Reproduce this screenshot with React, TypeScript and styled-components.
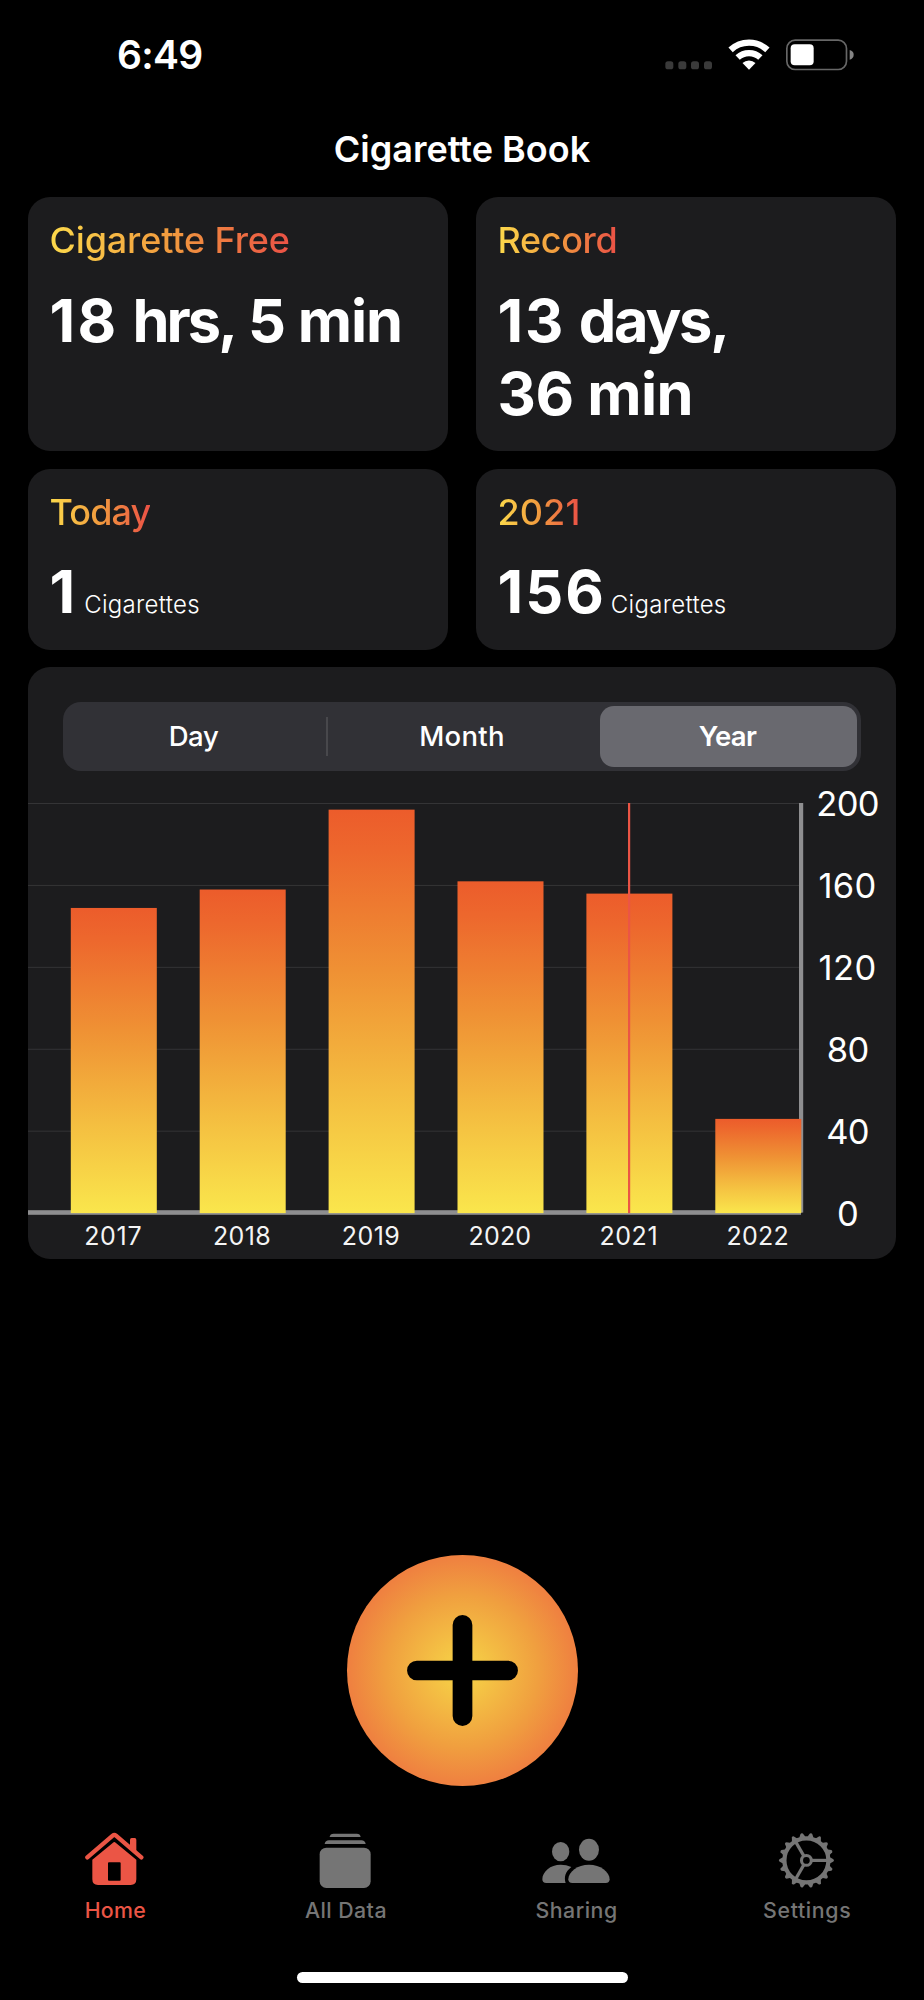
import React from "react";
import styled, { createGlobalStyle } from "styled-components";

const GlobalStyle = createGlobalStyle`
  *, *::before, *::after { box-sizing: border-box; }
  body {
    margin: 0;
    background: #000;
    color: #fff;
    font-family: Inter, "Liberation Sans", sans-serif;
  }
  button { font: inherit; color: inherit; border: 0; padding: 0; background: none; }
`;

const Screen = styled.div`
  display: flex;
  flex-direction: column;
  width: 924px;
  height: 2000px;
  background: #000;
  overflow: hidden;

  > * { flex: none; }
`;

const StatusBar = styled.header`
  display: flex;
  align-items: center;
  justify-content: space-between;
  height: 110px;
  padding: 0 70px 0 117px;
`;

const Clock = styled.time`
  font-size: 39px;
  font-weight: 600;
  line-height: 48px;
  letter-spacing: -0.7px;
`;

const StatusIcons = styled.svg`
  width: 189px;
  height: 32px;
  margin-top: -1px;
  display: block;
`;

const NavTitle = styled.h1`
  margin: 0;
  height: 87px;
  font-size: 36px;
  font-weight: 580;
  line-height: 78px;
  text-align: center;
`;

const Content = styled.main`
  display: flex;
  flex-direction: column;
  height: 1358px;
  padding: 0 28px;
`;

const StatGrid = styled.section`
  display: grid;
  grid-template-columns: 1fr 1fr;
  grid-template-rows: 254px 181.5px;
  gap: 17.5px 28px;
`;

const StatCard = styled.article`
  padding: 22px 21.5px;
  border-radius: 22px;
  background: #1c1c1e;
`;

const StatLabel = styled.h2<{ $track: number }>`
  width: fit-content;
  margin: 0 0 21.5px;
  font-size: 36px;
  font-weight: 450;
  line-height: 43px;
  letter-spacing: ${(p) => p.$track}px;
  color: transparent;
  background: linear-gradient(90deg, #fcd94b 0%, #f19a3e 50%, #eb5545 97%);
  background-clip: text;
  -webkit-background-clip: text;
`;

const StatLine = styled.div<{ $gap?: number }>`
  display: flex;
  align-items: baseline;
  gap: ${(p) => p.$gap ?? 0}px;
  line-height: 73px;
`;

const StatValue = styled.strong`
  font-size: 59.5px;
  font-weight: 700;
  white-space: pre;
`;

const Tracked = styled.span<{ $by: number }>`
  letter-spacing: ${(p) => p.$by}px;
`;

const StatUnit = styled.span`
  font-size: 24px;
  font-weight: 300;
  letter-spacing: 0.3px;
`;

const ChartCard = styled.section`
  display: flex;
  flex-direction: column;
  height: 592px;
  margin-top: 17px;
  padding-top: 35px;
  border-radius: 22px;
  background: #1c1c1e;
  overflow: hidden;
`;

const Segments = styled.div`
  display: grid;
  grid-template-columns: 265px 272px 257px;
  flex: none;
  height: 69px;
  margin: 0 35px;
  padding: 4px 0;
  border-radius: 18px;
  background: #313136;
`;

const Segment = styled.button<{ $selected?: boolean; $divided?: boolean; $track: number }>`
  display: flex;
  align-items: center;
  justify-content: center;
  padding-right: ${(p) => (p.$selected ? 2 : 4)}px;
  border-radius: ${(p) => (p.$selected ? "14px" : "0")};
  background: ${(p) =>
    p.$selected
      ? "#69696f"
      : p.$divided
        ? "linear-gradient(#48484c, #48484c) right center / 2px 39px no-repeat"
        : "none"};
  font-size: 27.5px;
  font-weight: ${(p) => (p.$selected ? 580 : 480)};
  line-height: 61px;
  letter-spacing: ${(p) => p.$track}px;
`;

const Chart = styled.svg`
  display: block;
  flex: none;
  width: 868px;
  height: 488px;
`;

const YearLabel = styled.text`
  fill: #f4f4f4;
  font-size: 25px;
  text-anchor: middle;
`;

const ScaleLabel = styled.text`
  fill: #fff;
  font-size: 34.5px;
  text-anchor: middle;
`;

const AddButton = styled.button`
  display: flex;
  align-items: center;
  justify-content: center;
  flex: none;
  width: 231px;
  height: 231px;
  margin: 0 auto 29px;
  border-radius: 50%;
  background: radial-gradient(circle closest-side, #f7d147 0%, #f5c845 17%, #f0a03f 65%, #ef8140 98%);
`;

const Plus = styled.svg`
  width: 111px;
  height: 111px;
  stroke: #000;
  stroke-width: 19.7px;
  stroke-linecap: round;
`;

const TabBar = styled.nav`
  display: grid;
  grid-template-columns: repeat(4, 1fr);
  height: 115px;
  padding: 15px 1.5px 0 0;
`;

const Tab = styled.a<{ $active?: boolean; $track: number }>`
  display: flex;
  flex-direction: column;
  align-items: center;
  color: ${(p) => (p.$active ? "#eb5545" : "#757575")};
  font-size: 21.3px;
  font-weight: 500;
  line-height: 26px;
  letter-spacing: ${(p) => p.$track}px;
`;

const TabIcon = styled.svg`
  display: block;
  height: 60px;
  margin-bottom: 7px;
  fill: currentColor;
`;

const HomeIndicator = styled.div`
  width: 331px;
  height: 11px;
  margin: auto auto 17.5px;
  border-radius: 6px;
  background: #fff;
`;

const years = [
  { year: 2017, count: 149, track: 0.7 },
  { year: 2018, count: 158, track: 0.4 },
  { year: 2019, count: 197, track: 0.4 },
  { year: 2020, count: 162, track: 0.2 },
  { year: 2021, count: 156, track: 0.6 },
  { year: 2022, count: 46, track: 0.2 },
];
const scale = [200, 160, 120, 80, 40, 0];

const PLOT_TOP = 32.5;
const PLOT_HEIGHT = 409.6;
const yFor = (value: number) => PLOT_TOP + PLOT_HEIGHT * (1 - value / 200);
const xFor = (index: number) => 42.8 + index * 128.9;

function YearChart() {
  return (
    <Chart viewBox="0 0 868 488">
      <defs>
        <linearGradient id="bar" x1="0" y1="0" x2="0" y2="1">
          <stop offset="0" stopColor="#ec5c2b" />
          <stop offset="0.1" stopColor="#ed672d" />
          <stop offset="0.4" stopColor="#ef9134" />
          <stop offset="0.7" stopColor="#f4bd40" />
          <stop offset="1" stopColor="#fae64c" />
        </linearGradient>
      </defs>
      {scale.slice(0, 5).map((v) => (
        <rect key={v} x="0" y={yFor(v) - 0.5} width="773" height="1" fill="#343436" />
      ))}
      <rect x="771" y={PLOT_TOP - 0.5} width="4.2" height={PLOT_HEIGHT} fill="#8e8e90" />
      <rect x="0" y="439.2" width="773" height="4.6" fill="#8e8e90" />
      {years.map(({ year, count, track }, i) => (
        <g key={year}>
          <rect x={xFor(i)} y={yFor(count)} width="86" height={yFor(0) - yFor(count)} fill="url(#bar)" />
          <YearLabel x={xFor(i) + 42.4} y="473.6" letterSpacing={track}>{year}</YearLabel>
        </g>
      ))}
      <rect x="600" y={PLOT_TOP - 0.5} width="2.2" height={PLOT_HEIGHT + 0.5} fill="#eb5545" />
      {scale.map((v) => (
        <ScaleLabel key={v} x="819.6" y={yFor(v) + 12.5} letterSpacing={v === 160 || v === 120 ? 0.4 : -0.7}>{v}</ScaleLabel>
      ))}
    </Chart>
  );
}

function GearIcon() {
  const teeth = Array.from({ length: 18 }, (_, i) => i * 20);
  return (
    <TabIcon viewBox="-29.4 -30.4 60 60" width="60">
      {teeth.map((a) => (
        <path key={a} d="M22 -3.3 L24 -2.8 L27 -1.2 Q28.2 0 27 1.2 L24 2.8 L22 3.3Z" transform={`rotate(${a})`} />
      ))}
      <g fill="none" stroke="currentColor">
        <circle r="22" strokeWidth="4.2" />
        <circle r="4.9" strokeWidth="3.1" />
        {[0, 120, 240].map((a) => (
          <path key={a} d="M5.5 0H22" strokeWidth="3.2" transform={`rotate(${a})`} />
        ))}
      </g>
    </TabIcon>
  );
}

export default function App() {
  return (
    <>
      <GlobalStyle />
      <Screen>
        <StatusBar>
          <Clock>6:49</Clock>
          <StatusIcons viewBox="46 56 567 96">
            {[59, 98, 136, 175].map((x) => (
              <rect key={x} x={x - 12} y="123" width="24" height="24" rx="8" fill="#3a3a3a" />
            ))}
            <g fill="none" stroke="#fff">
              <path d="M242.8 88.8 A81 81 0 0 1 353.2 88.8" strokeWidth="19" />
              <path d="M263.9 111.4 A50.5 50.5 0 0 1 332.1 111.4" strokeWidth="19" />
            </g>
            <path d="M298 148 L278.5 128 A29 29 0 0 1 317.5 128Z" fill="#fff" />
            <rect x="411.5" y="59.5" width="179" height="88" rx="25" fill="none" stroke="#676767" strokeWidth="5" />
            <rect x="423" y="72" width="69" height="63" rx="12" fill="#fff" />
            <path d="M600 89 Q612 92 612 103.5 Q612 115 600 118Z" fill="#858585" />
          </StatusIcons>
        </StatusBar>
        <NavTitle>Cigarette Book</NavTitle>

        <Content>
          <StatGrid>
            <StatCard>
              <StatLabel $track={-0.15}>Cigarette Free</StatLabel>
              <StatLine>
                <StatValue>
                  <Tracked $by={2.4}>18</Tracked>
                  <Tracked $by={-0.2}> </Tracked>
                  <Tracked $by={-3}>hrs</Tracked>
                  <Tracked $by={-1.2}>, </Tracked>
                  <Tracked $by={-1.1}>5 min</Tracked>
                </StatValue>
              </StatLine>
            </StatCard>
            <StatCard>
              <StatLabel $track={-0.35}>Record</StatLabel>
              <StatLine>
                <StatValue>
                  <Tracked $by={1.8}>13</Tracked>
                  <Tracked $by={-0.5}> </Tracked>
                  <Tracked $by={-2.2}>days,</Tracked>
                </StatValue>
              </StatLine>
              <StatLine>
                <StatValue><Tracked $by={-0.5}>36 min</Tracked></StatValue>
              </StatLine>
            </StatCard>
            <StatCard>
              <StatLabel $track={-0.9}>Today</StatLabel>
              <StatLine $gap={9}><StatValue>1</StatValue><StatUnit>Cigarettes</StatUnit></StatLine>
            </StatCard>
            <StatCard>
              <StatLabel $track={0.1}>2021</StatLabel>
              <StatLine $gap={5}>
                <StatValue><Tracked $by={2}>156</Tracked></StatValue>
                <StatUnit>Cigarettes</StatUnit>
              </StatLine>
            </StatCard>
          </StatGrid>

          <ChartCard>
            <Segments>
              <Segment $divided $track={-0.4}>Day</Segment>
              <Segment $track={0.3}>Month</Segment>
              <Segment $selected $track={-0.7}>Year</Segment>
            </Segments>
            <YearChart />
          </ChartCard>
        </Content>

        <AddButton aria-label="Add">
          <Plus viewBox="0 0 111 111">
            <path d="M55.5 9.9V101.1M9.9 55.5H101.1" />
          </Plus>
        </AddButton>

        <TabBar>
          <Tab $active $track={0.3}>
            <TabIcon viewBox="107 60 180 180" width="60">
              <path d="M114 142 L190 77 Q195 73 200 77 L276 142" fill="none" stroke="currentColor" strokeWidth="13" strokeLinecap="round" />
              <path d="M242 118 V89 Q242 84 247 84 H256 Q261 84 261 89 V134Z" />
              <path fillRule="evenodd" d="M191 98 Q195 94 199 98 L261 149 V208 Q261 225 244 225 H146 Q129 225 129 208 V149Z M176 159 V209 Q176 212 179 212 H211 Q214 212 214 209 V159 Q214 157 211 157 H179 Q176 157 176 159Z" />
            </TabIcon>
            Home
          </Tab>
          <Tab $track={0.45}>
            <TabIcon viewBox="799 60 180 180" width="60">
              <path d="M840 81 Q841 71 852 71 H921 Q932 71 933 81Z" />
              <path d="M825 102 Q827 91 838 91 H935 Q946 91 948 102Z" />
              <rect x="810" y="113" width="153" height="121" rx="20" />
            </TabIcon>
            All Data
          </Tab>
          <Tab $track={0.5}>
            <TabIcon viewBox="122 60 220 180" width="73.3">
              <ellipse cx="184" cy="125" rx="26" ry="29" />
              <ellipse cx="269" cy="119" rx="30" ry="33" />
              <path d="M184 164 Q201 164 216 171 C197 186 194 202 199 219 H141 Q129 219 129 208 C129 185 153 164 184 164Z" />
              <path d="M207 208 C207 185 235 164 269 164 C303 164 331 185 331 208 Q331 219 319 219 H219 Q207 219 207 208Z" />
            </TabIcon>
            Sharing
          </Tab>
          <Tab $track={0.65}>
            <GearIcon />
            Settings
          </Tab>
        </TabBar>
        <HomeIndicator />
      </Screen>
    </>
  );
}
